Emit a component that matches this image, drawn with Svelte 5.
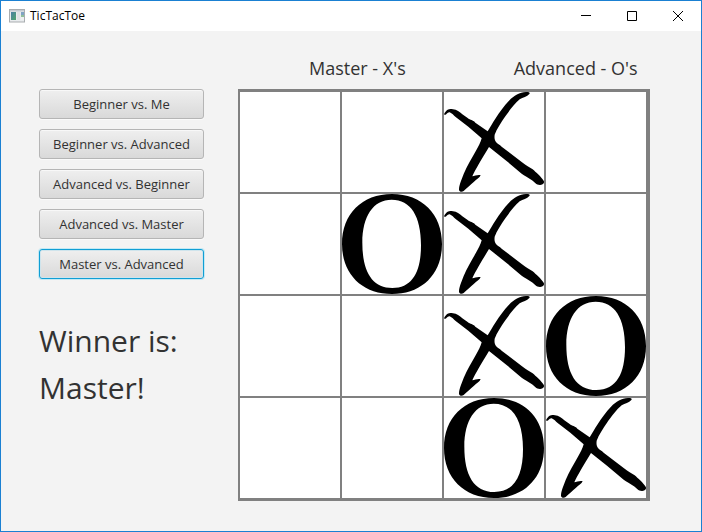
<script>
  const matchups = [
    'Beginner vs. Me',
    'Beginner vs. Advanced',
    'Advanced vs. Beginner',
    'Advanced vs. Master',
    'Master vs. Advanced'
  ];
  let selected = $state('Master vs. Advanced');
  const board = [
    ['', '', 'X', ''],
    ['', 'O', 'X', ''],
    ['', '', 'X', 'O'],
    ['', '', 'O', 'X']
  ];
</script>

<div class="window">
  <header class="titlebar">
    <svg class="app-icon" viewBox="0 0 16 14" aria-hidden="true">
      <defs>
        <linearGradient id="pane" x1="0" y1="0" x2="1" y2="1">
          <stop offset="0" stop-color="#4a7fa5" />
          <stop offset="1" stop-color="#4fa56c" />
        </linearGradient>
      </defs>
      <rect x="0.5" y="0.5" width="15" height="12.5" fill="#e9ecee" stroke="#a9adb0" />
      <rect x="1" y="1" width="14" height="1.5" fill="#c4cad0" />
      <rect x="2" y="3" width="5" height="8" fill="url(#pane)" />
      <rect x="8" y="3" width="3" height="8" fill="#dfe2e4" />
      <rect x="12" y="3" width="3" height="3" fill="#7fa3c4" />
      <rect x="12" y="6" width="3" height="2" fill="#8fbf9b" />
      <rect x="12" y="8" width="3" height="3" fill="#eef0f1" />
    </svg>
    <span class="title">TicTacToe</span>
    <div class="controls">
      <button aria-label="Minimize">
        <svg viewBox="0 0 10 10"><path d="M0 4.5H10" /></svg>
      </button>
      <button aria-label="Maximize">
        <svg viewBox="0 0 10 10"><path d="M.5 .5H9.5V9.5H.5Z" /></svg>
      </button>
      <button aria-label="Close">
        <svg viewBox="0 0 10 10"><path d="M0 0L10 10M10 0L0 10" /></svg>
      </button>
    </div>
  </header>

  <main>
    <aside>
      {#each matchups as name}
        <button class="match" class:focused={selected === name} onclick={() => (selected = name)}>{name}</button>
      {/each}
      <p class="result">Winner is:<br />Master!</p>
    </aside>

    <section>
      <div class="players">
        <span>Master - X's</span>
        <span>Advanced - O's</span>
      </div>
      <div class="board">
        {#each board as row}
          {#each row as mark}
            <div class="cell">
              {#if mark === 'X'}
                <svg viewBox="12 18 300 300" role="img" aria-label="X">
                  <path d="M14 87C11 84 14 80 16 78C21 70 29 67 39 70C50 71 59 78 67 85L84 97C91 103 98 101 106 110L143 136C151 123 159 108 166 98C179 78 192 59 207 44C222 29 239 18 258 18C267 17 271 20 268 24C261 32 249 34 239 40C224 52 208 74 195 92C184 109 170 128 164 146C163 154 163 160 168 168C172 174 179 176 185 182L246 229C259 239 268 243 278 250C287 258 304 273 311 284C315 291 308 296 300 297C288 297 284 289 276 283C265 274 253 269 245 263L195 221L147 183C136 202 126 217 116 235C108 249 101 261 97 271C104 270 115 265 122 268C119 275 109 281 102 287C92 296 80 306 71 315C66 319 58 318 57 311C57 299 64 282 71 264C81 240 95 218 107 196C115 181 122 169 125 157L85 122L47 93C41 88 36 82 29 79C21 78 21 86 14 87Z" />
                </svg>
              {:else if mark === 'O'}
                <svg viewBox="12 12 300 300" role="img" aria-label="O">
                  <path
                    fill-rule="evenodd"
                    d="M162 12C252 12 312 72 312 162C312 252 252 312 162 312C72 312 12 252 12 162C12 72 72 12 162 12ZM161 29C106 29 73 78 73 158C73 244 102 294 163 294C224 294 249 244 249 166C249 78 218 29 161 29Z"
                  />
                </svg>
              {/if}
            </div>
          {/each}
        {/each}
      </div>
    </section>
  </main>
</div>

<style>
  :global(body) {
    margin: 0;
  }

  .window {
    box-sizing: border-box;
    min-height: 100vh;
    border: 1px solid #1a80d2;
    background: #f3f3f3;
    color: #323232;
    font-family: 'Open Sans', 'Noto Sans', sans-serif;
  }

  .titlebar {
    display: flex;
    align-items: center;
    height: 30px;
    padding-left: 8px;
    background: #fff;
    color: #000;
    font-size: 12px;
  }

  .app-icon {
    width: 16px;
    height: 14px;
    margin-right: 5px;
  }

  .title {
    font-family: 'Open Sans', 'Noto Sans', sans-serif;
    font-size: 12px;
    line-height: 16px;
  }

  .controls {
    display: flex;
    align-self: stretch;
    margin-left: auto;
  }

  .controls button {
    display: flex;
    align-items: center;
    justify-content: center;
    width: 46px;
    padding: 0;
    border: 0;
    background: none;
  }

  .controls svg {
    width: 10px;
    height: 10px;
    overflow: visible;
    fill: none;
    stroke: #000;
  }

  main {
    display: flex;
    align-items: flex-start;
    gap: 34px;
    padding: 22px 38px 30px;
  }

  aside {
    display: flex;
    flex-direction: column;
    gap: 10px;
    width: 165px;
    padding-top: 36px;
  }

  .match {
    height: 30px;
    padding: 0;
    border: 1px solid #b5b5b5;
    border-radius: 3px;
    background: linear-gradient(#efefef, #d9d9d9);
    box-shadow:
      inset 0 1px #f8f8f8,
      0 1px #fafafa;
    color: #323232;
    font-family: inherit;
    font-size: 13px;
    line-height: 20px;
    white-space: nowrap;
  }

  .match.focused {
    border-color: #109ed4;
    box-shadow:
      inset 0 0 0 1px #cfe4ec,
      0 0 0 1px #c3e9f4;
  }

  .result {
    margin: 28px 0 0;
    font-size: 30px;
    line-height: 47px;
    white-space: nowrap;
  }

  .players {
    display: flex;
    gap: 108px;
    height: 36px;
    padding-left: 71px;
    font-size: 18px;
    line-height: 30px;
    white-space: nowrap;
  }

  .board {
    display: grid;
    grid-template-columns: repeat(4, 100px);
    grid-auto-rows: 100px;
    gap: 2px;
    padding: 3px 4px 3px 2px;
    background: #808080;
  }

  .cell {
    background: #fff;
  }

  .cell svg {
    display: block;
    width: 100%;
    height: 100%;
    fill: #000;
  }
</style>
